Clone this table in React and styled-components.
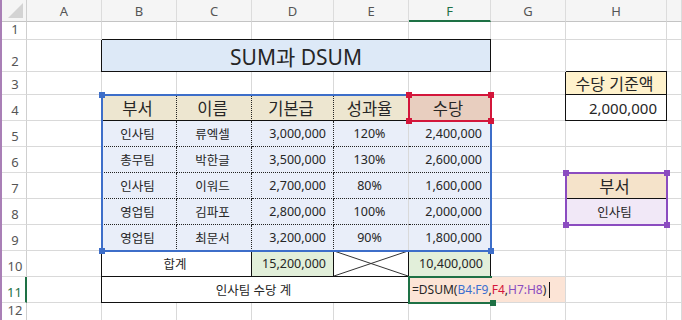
import React from 'react';
import styled, { createGlobalStyle } from 'styled-components';

const GRID = '#d9d9d9';
const INK = '#262626';
const FONT = `"Noto Sans", "Noto Sans CJK KR", sans-serif`;

const GlobalStyle = createGlobalStyle`
  html, body { margin: 0; padding: 0; background: #fff; overflow: hidden; }
  body { font-family: ${FONT}; color: ${INK}; }
`;

// last column is only a sliver at the window edge, its letter isn't visible
const COLS = ['A', 'B', 'C', 'D', 'E', 'F', 'G', 'H', 'I'];
const LABELS = ['A', 'B', 'C', 'D', 'E', 'F', 'G', 'H', ''];
const ACTIVE_COL = 'F';
const ACTIVE_ROW = 11;

const Sheet = styled.div`
  display: grid;
  grid-template-columns: 25px 75px 75px 75px 82px 75px 82px 75px 101px 1fr;
  grid-template-rows: 22px 18px 32px 23px repeat(8, 26px) 18px;
  width: 680px;
  height: 320px;
  border-left: 2px solid #a97fb6;
  overflow: hidden;
  background: #fff;
`;

const Corner = styled.div`
  grid-row: 1;
  grid-column: 1;
  background: #f5f5f5;
  border-right: 1px solid #cfcfcf;
  border-bottom: 1px solid #c4c4c4;
  display: flex;
  align-items: flex-end;
  justify-content: flex-end;
  padding: 0 3px 3px 0;
`;

const ColHead = styled.div`
  grid-row: 1;
  grid-column: ${p => p.$col};
  background: #f5f5f5;
  border-right: 1px solid #dcdcdc;
  border-bottom: ${p => (p.$active ? '2px solid #1e7145' : '1px solid #c4c4c4')};
  color: ${p => (p.$active ? '#1e7145' : '#555')};
  font-size: 13px;
  display: flex;
  align-items: center;
  justify-content: center;
  padding-top: ${p => (p.$active ? '1px' : '0')};
`;

const RowHead = styled.div`
  grid-row: ${p => p.$row};
  grid-column: 1;
  background: #fff;
  border-right: ${p => (p.$active ? '2px solid #1e7145' : '1px solid #cfcfcf')};
  border-bottom: 1px solid #dcdcdc;
  color: ${p => (p.$active ? '#1e7145' : '#555')};
  font-size: 13px;
  line-height: 1;
  display: flex;
  align-items: flex-end;
  justify-content: center;
  padding-bottom: 3px;
  padding-left: 2px;
`;

const shadows = p => {
  const list = [];
  if (p.$t) list.push(`0 -1px 0 ${p.$t}`);
  if (p.$l) list.push(`-1px 0 0 ${p.$l}`);
  return list.length ? list.join(', ') : 'none';
};

const Cell = styled.div`
  grid-row: ${p => p.$row};
  grid-column: ${p => p.$col} / span ${p => p.$span || 1};
  display: flex;
  align-items: center;
  justify-content: ${p => (p.$align === 'right' ? 'flex-end' : p.$align === 'left' ? 'flex-start' : 'center')};
  padding: 0 ${p => p.$pad ?? 7}px 0 ${p => p.$padL ?? 4}px;
  background: ${p => p.$fill || '#fff'};
  border-right: 1px ${p => p.$rs || 'solid'} ${p => p.$r || GRID};
  border-bottom: 1px ${p => p.$bs || 'solid'} ${p => p.$b || GRID};
  box-shadow: ${shadows};
  font-size: ${p => p.$size || 12.5}px;
  white-space: nowrap;
  min-width: 0;
  overflow: visible;
`;

const Cross = styled.svg`
  flex: 1;
  align-self: stretch;
  margin: 0 -7px 0 -4px;
`;

const Selection = styled.div`
  grid-row: ${p => p.$row} / span ${p => p.$rows || 1};
  grid-column: ${p => p.$col} / span ${p => p.$cols || 1};
  position: relative;
  z-index: ${p => p.$z || 1};
  margin: -1px -1px -1px -1px;
  border: 2px solid ${p => p.$color};
  border-right-width: ${p => (p.$openRight ? 0 : 2)}px;
  pointer-events: none;
`;

const Handle = styled.span`
  position: absolute;
  width: 6px;
  height: 6px;
  background: ${p => p.$color};
  ${p => (p.$v === 'top' ? 'top: -4px;' : 'bottom: -4px;')}
  ${p => (p.$h === 'left' ? 'left: -4px;' : 'right: -4px;')}
`;

const Formula = styled.span`
  display: flex;
  align-items: center;
  font-size: 12px;
`;

const Ref = styled.span`
  color: ${p => p.$color};
`;

const Caret = styled.span`
  display: inline-block;
  width: 1px;
  height: 16px;
  margin-left: 3px;
  background: #111;
`;

const HEAD_FILL = '#ede6d0';
const DATA_FILL = '#e9eef9';
const GREEN_FILL = '#e2efda';
const BLACK = '#111';
const DOT = '#222';

const people = [
  ['인사팀', '류엑셀', '3,000,000', '120%', '2,400,000'],
  ['총무팀', '박한글', '3,500,000', '130%', '2,600,000'],
  ['인사팀', '이워드', '2,700,000', '80%', '1,600,000'],
  ['영업팀', '김파포', '2,800,000', '100%', '2,000,000'],
  ['영업팀', '최문서', '3,200,000', '90%', '1,800,000'],
];

const specs = {
  B2: { span: 5, text: 'SUM과 DSUM', fill: '#dde9f7', size: 21, t: BLACK, l: BLACK, r: BLACK, b: BLACK, padL: 0, pad: 0 },
  H3: { text: '수당 기준액', fill: '#fff2cc', size: 16, t: BLACK, l: BLACK, r: BLACK, b: BLACK },
  H4: { text: '2,000,000', size: 15, align: 'right', pad: 9, l: BLACK, r: BLACK, b: BLACK },
  B4: { text: '부서', fill: HEAD_FILL, size: 16.5, r: DOT, rs: 'dotted', b: BLACK },
  C4: { text: '이름', fill: HEAD_FILL, size: 16.5, r: DOT, rs: 'dotted', b: BLACK },
  D4: { text: '기본급', fill: HEAD_FILL, size: 16.5, r: DOT, rs: 'dotted', b: BLACK },
  E4: { text: '성과율', fill: HEAD_FILL, size: 16.5, b: BLACK },
  F4: { text: '수당', fill: '#e8cebf', size: 16.5 },
  B10: { span: 2, text: '합계', l: BLACK, r: BLACK, b: BLACK },
  D10: { text: '15,200,000', fill: GREEN_FILL, align: 'right', r: BLACK, b: BLACK },
  E10: { cross: true, r: BLACK, b: BLACK },
  F10: { text: '10,400,000', fill: GREEN_FILL, align: 'right', r: BLACK, b: BLACK },
  B11: { span: 4, text: '인사팀 수당 계', l: BLACK, r: BLACK, b: BLACK },
  F11: { span: 2, formula: true, fill: '#fce4d6', align: 'left', padL: 3 },
  H7: { text: '부서', fill: '#f5e3ca', size: 16.5, b: BLACK },
  H8: { text: '인사팀', fill: '#f1e8f7' },
};

people.forEach((row, i) => {
  const r = 5 + i;
  const dotted = { r: DOT, rs: 'dotted', b: DOT, bs: 'dotted' };
  specs[`B${r}`] = { text: row[0], fill: DATA_FILL, ...dotted };
  specs[`C${r}`] = { text: row[1], fill: DATA_FILL, ...dotted };
  specs[`D${r}`] = { text: row[2], fill: DATA_FILL, align: 'right', ...dotted };
  specs[`E${r}`] = { text: row[3], fill: DATA_FILL, b: DOT, bs: 'dotted' };
  specs[`F${r}`] = { text: row[4], fill: DATA_FILL, align: 'right', pad: 8, b: DOT, bs: 'dotted' };
});

function CellContent({ spec }) {
  if (spec.cross) {
    return (
      <Cross viewBox="0 0 100 100" preserveAspectRatio="none">
        <line x1="0" y1="0" x2="100" y2="100" stroke="#333" strokeWidth="1" vectorEffect="non-scaling-stroke" />
        <line x1="0" y1="100" x2="100" y2="0" stroke="#333" strokeWidth="1" vectorEffect="non-scaling-stroke" />
      </Cross>
    );
  }
  if (spec.formula) {
    return (
      <Formula>
        =DSUM(<Ref $color="#3b6fd0">B4:F9</Ref>,<Ref $color="#d4163c">F4</Ref>,<Ref $color="#8a4cc0">H7:H8</Ref>)
        <Caret />
      </Formula>
    );
  }
  return spec.text || null;
}

function renderCells() {
  const out = [];
  for (let r = 1; r <= 12; r++) {
    let skip = 0;
    COLS.forEach((c, ci) => {
      if (skip > 0) {
        skip--;
        return;
      }
      const spec = specs[`${c}${r}`] || {};
      if (spec.span) skip = spec.span - 1;
      out.push(
        <Cell
          key={`${c}${r}`}
          $row={r + 1}
          $col={ci + 2}
          $span={spec.span}
          $fill={spec.fill}
          $size={spec.size}
          $align={spec.align}
          $pad={spec.pad}
          $padL={spec.padL}
          $r={spec.r}
          $rs={spec.rs}
          $b={spec.b}
          $bs={spec.bs}
          $t={spec.t}
          $l={spec.l}
        >
          <CellContent spec={spec} />
        </Cell>
      );
    });
  }
  return out;
}

const corners = [
  ['top', 'left'],
  ['top', 'right'],
  ['bottom', 'left'],
  ['bottom', 'right'],
];

export default function App() {
  return (
    <>
      <GlobalStyle />
      <Sheet>
        <Corner>
          <svg width="15" height="15" viewBox="0 0 15 15">
            <polygon points="15,0 15,15 0,15" fill="#d3d3d3" />
          </svg>
        </Corner>
        {COLS.map((c, i) => (
          <ColHead key={c} $col={i + 2} $active={c === ACTIVE_COL}>
            {LABELS[i]}
          </ColHead>
        ))}
        {Array.from({ length: 12 }, (_, i) => (
          <RowHead key={i} $row={i + 2} $active={i + 1 === ACTIVE_ROW}>
            {i + 1}
          </RowHead>
        ))}

        {renderCells()}

        <Selection $row={5} $rows={6} $col={3} $cols={5} $color="#3d6ec9">
          <Handle $v="top" $h="left" $color="#3d6ec9" />
          <Handle $v="bottom" $h="left" $color="#3d6ec9" />
          <Handle $v="bottom" $h="right" $color="#3d6ec9" />
        </Selection>
        <Selection $row={5} $col={7} $color="#d3163b" $z={2}>
          {corners.map(([v, h]) => (
            <Handle key={v + h} $v={v} $h={h} $color="#d3163b" />
          ))}
        </Selection>
        <Selection $row={8} $rows={2} $col={9} $color="#8b4cc0">
          {corners.map(([v, h]) => (
            <Handle key={v + h} $v={v} $h={h} $color="#8b4cc0" />
          ))}
        </Selection>
        <Selection $row={12} $col={7} $color="#1e7145" $openRight>
          <Handle $v="bottom" $h="right" $color="#1e7145" />
        </Selection>
      </Sheet>
    </>
  );
}
